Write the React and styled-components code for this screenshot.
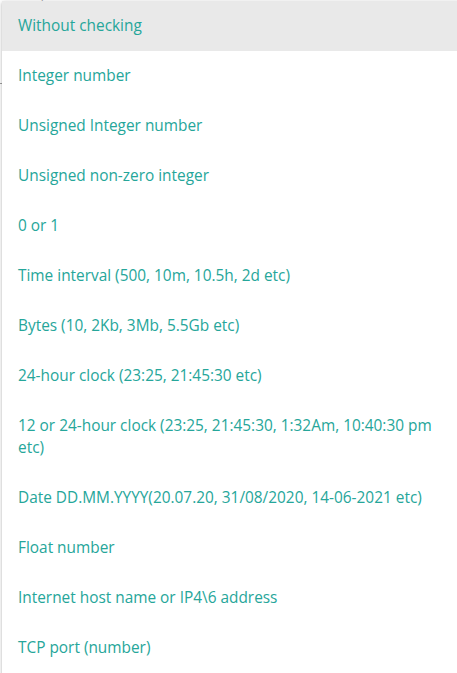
import React, { useState } from 'react';
import styled, { createGlobalStyle } from 'styled-components';

const options = [
	'Without checking',
	'Integer number',
	'Unsigned Integer number',
	'Unsigned non-zero integer',
	'0 or 1',
	'Time interval (500, 10m, 10.5h, 2d etc)',
	'Bytes (10, 2Kb, 3Mb, 5.5Gb etc)',
	'24-hour clock (23:25, 21:45:30 etc)',
	'12 or 24-hour clock (23:25, 21:45:30, 1:32Am, 10:40:30 pm etc)',
	'Date DD.MM.YYYY(20.07.20, 31/08/2020, 14-06-2021 etc)',
	'Float number',
	'Internet host name or IP4\\6 address',
	'TCP port (number)',
];

const App = () => {
	const [selected, setSelected] = useState(0);
	return (
		<Page>
			<GlobalStyle />
			<Field>
				<Label>Check parameters as</Label>
				<Input>{options[selected]}</Input>
			</Field>
			<Dropdown>
				{options.map((text, i) => (
					<Option key={text} active={i === selected} onClick={() => setSelected(i)}>
						{text}
					</Option>
				))}
			</Dropdown>
		</Page>
	);
};

const GlobalStyle = createGlobalStyle`
	html, body {
		margin: 0;
		padding: 0;
		background: #fff;
		overflow: hidden;
	}
	body {
		font-family: 'Open Sans', 'Noto Sans', sans-serif;
	}
`;
const Page = styled.div`
	position: relative;
	width: 457px;
	height: 673px;
	overflow: hidden;
`;
const Field = styled.div`
	display: flex;
	flex-direction: column;
	padding-left: 4px;
	margin-top: -11px;
`;
const Label = styled.div`
	font-size: 12px;
	line-height: 14px;
	color: #9e9e9e;
`;
const Input = styled.div`
	height: 44px;
	line-height: 44px;
	font-size: 15px;
	color: #333;
	border-bottom: 1px solid #9e9e9e;
	margin-left: -4px;
	padding-left: 4px;
	margin-top: 36px;
`;
const Dropdown = styled.ul`
	position: absolute;
	top: 1px;
	left: 2px;
	right: -10px;
	bottom: -40px;
	overflow: hidden;
	margin: 0;
	padding: 0;
	list-style: none;
	background: #fff;
	box-shadow: 0 2px 2px 0 rgba(0, 0, 0, 0.14), 0 3px 1px -2px rgba(0, 0, 0, 0.12),
		0 1px 5px 0 rgba(0, 0, 0, 0.2);
`;
const Option = styled.li`
	min-height: 50px;
	box-sizing: border-box;
	padding: 14px 16px;
	padding-right: 30px;
	font-size: 15.4px;
	line-height: 22px;
	color: #26a69a;
	background: ${(props) => (props.active ? '#e9e9e9' : '#fff')};
	cursor: pointer;
`;

export default App;
